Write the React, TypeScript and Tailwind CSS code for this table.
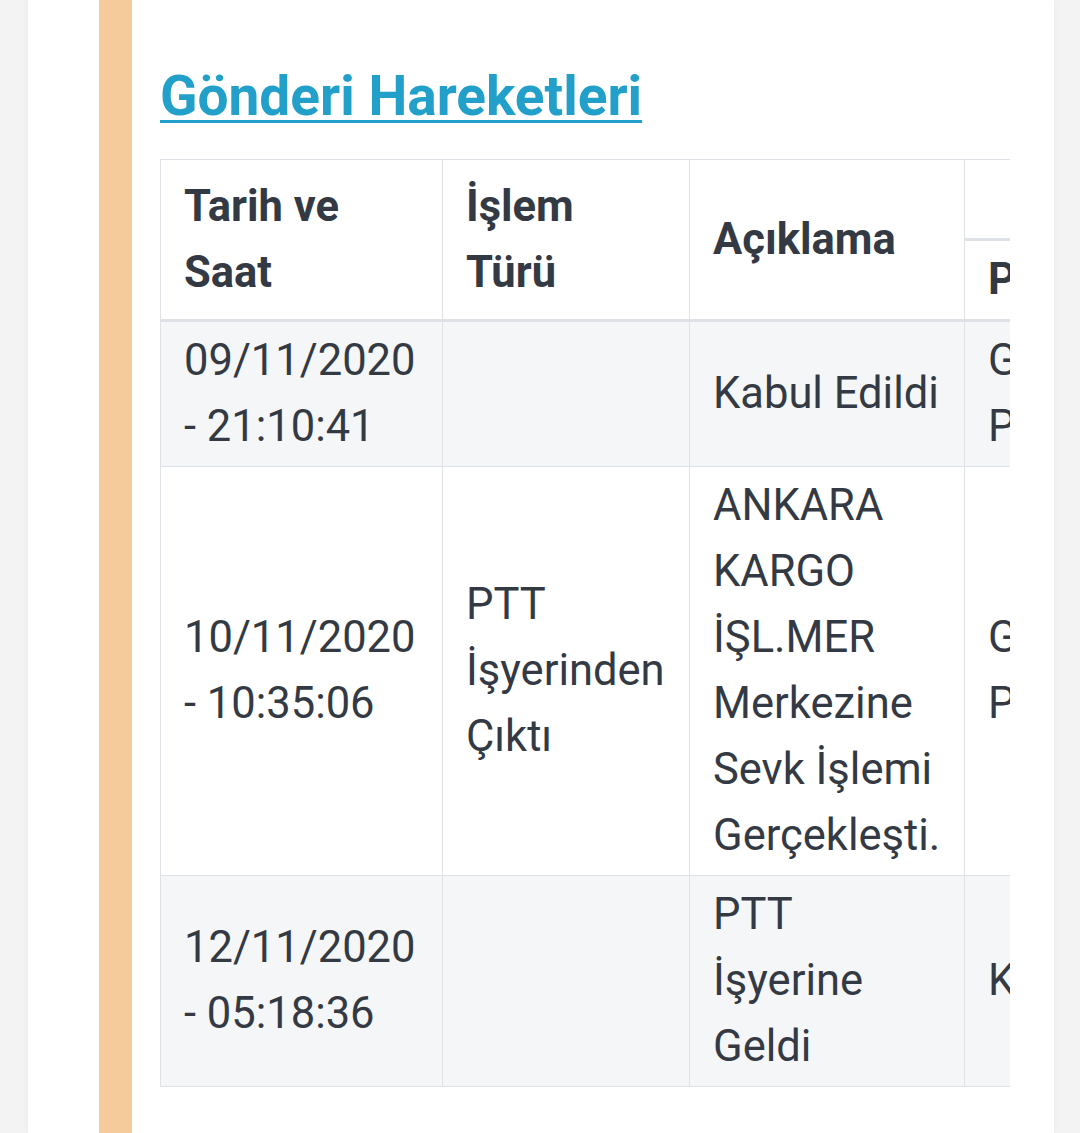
const rows = [
  {
    date: "09/11/2020 - 21:10:41",
    type: "",
    desc: "Kabul Edildi",
    place: "GAZİOSMANPAŞA PTT",
    city: "ANKARA",
  },
  {
    date: "10/11/2020 - 10:35:06",
    type: "PTT İşyerinden Çıktı",
    desc: "ANKARA KARGO İŞL.MER Merkezine Sevk İşlemi Gerçekleşti.",
    place: "GAZİOSMANPAŞA PTT",
    city: "ANKARA",
  },
  {
    date: "12/11/2020 - 05:18:36",
    type: "",
    desc: "PTT İşyerine Geldi",
    place: "KEÇİÖREN",
    city: "ANKARA",
  },
];

const cell = "border border-[#dee2e6] pl-[23px] pr-[12px] py-[6px] align-middle text-left";

export default function App() {
  return (
    <div
      className="h-[1133px] overflow-hidden bg-[#f3f3f3] pl-[28px] pr-[26px] text-[#343a44]"
      style={{ fontFamily: "Roboto, 'Noto Sans', sans-serif" }}
    >
      <div className="h-full bg-white pl-[71px] pr-[44px] shadow-[0_0_6px_rgba(0,0,0,0.04)]">
        <div className="h-full border-l-[33px] border-[#f6cb9b] pl-[28px] pt-[63px]">
          <h2 className="text-[55px] font-bold leading-[67px] text-[#23a0c9] underline decoration-[3px] underline-offset-[5px]">
            Gönderi Hareketleri
          </h2>

          <div className="mt-[29px] w-[850px] overflow-hidden">
            <table className="w-[1380px] table-fixed border-collapse text-[43.5px] leading-[66px]">
              <colgroup>
                <col className="w-[282px]" />
                <col className="w-[247px]" />
                <col className="w-[275px]" />
                <col className="w-[288px]" />
                <col className="w-[288px]" />
              </colgroup>
              <thead>
                <tr>
                  <th rowSpan={2} className={`${cell} border-b-[3px] font-bold`}>
                    Tarih ve
                    <br />
                    Saat
                  </th>
                  <th rowSpan={2} className={`${cell} border-b-[3px] font-bold`}>
                    İşlem
                    <br />
                    Türü
                  </th>
                  <th rowSpan={2} className={`${cell} border-b-[3px] font-bold`}>
                    Açıklama
                  </th>
                  <th colSpan={2} className={`${cell} border-b-[3px] text-center font-bold`}>
                    <span className="pl-[120px]">Gönderinin Yeri</span>
                  </th>
                </tr>
                <tr>
                  <th className={`${cell} border-b-[3px] font-bold`}>PTT Birimi</th>
                  <th className={`${cell} border-b-[3px] font-bold`}>İl</th>
                </tr>
              </thead>
              <tbody>
                {rows.map((r, i) => (
                  <tr key={i} className={i % 2 === 0 ? "bg-[#f5f6f8]" : "bg-white"}>
                    <td className={cell}>{r.date}</td>
                    <td className={cell}>{r.type}</td>
                    <td className={cell}>{r.desc}</td>
                    <td className={cell}>{r.place}</td>
                    <td className={cell}>{r.city}</td>
                  </tr>
                ))}
              </tbody>
            </table>
          </div>
        </div>
      </div>
    </div>
  );
}
